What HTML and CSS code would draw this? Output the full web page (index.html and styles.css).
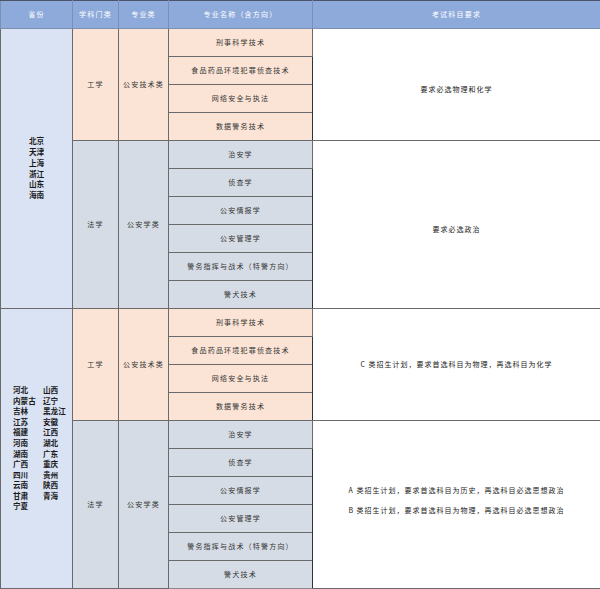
FILE: index.html
```html
<!DOCTYPE html>
<html lang="zh">
<head>
<meta charset="utf-8">
<link rel="stylesheet" href="styles.css">
</head>
<body>
<table class="grid">
  <colgroup>
    <col class="c1"><col class="c2"><col class="c3"><col class="c4"><col class="c5">
  </colgroup>
  <thead>
    <tr class="head">
      <th>省份</th><th>学科门类</th><th>专业类</th><th>专业名称（含方向）</th><th class="req-h">考试科目要求</th>
    </tr>
  </thead>
  <tbody>
    <tr class="eng">
      <td class="prov" rowspan="10"><div class="plist"><span>北京</span><span>天津</span><span>上海</span><span>浙江</span><span>山东</span><span>海南</span></div></td>
      <td rowspan="4">工学</td><td rowspan="4">公安技术类</td><td>刑事科学技术</td>
      <td class="req" rowspan="4"><span class="req-t low">要求必选物理和化学</span></td>
    </tr>
    <tr class="eng"><td>食品药品环境犯罪侦查技术</td></tr>
    <tr class="eng"><td>网络安全与执法</td></tr>
    <tr class="eng"><td>数据警务技术</td></tr>
    <tr class="law">
      <td rowspan="6">法学</td><td rowspan="6">公安学类</td><td>治安学</td>
      <td class="req" rowspan="6"><span class="req-t low">要求必选政治</span></td>
    </tr>
    <tr class="law"><td>侦查学</td></tr>
    <tr class="law"><td>公安情报学</td></tr>
    <tr class="law"><td>公安管理学</td></tr>
    <tr class="law"><td>警务指挥与战术（特警方向）</td></tr>
    <tr class="law"><td>警犬技术</td></tr>

    <tr class="eng">
      <td class="prov" rowspan="10">
        <div class="pgrid">
          <span>河北</span><span>山西</span>
          <span>内蒙古</span><span>辽宁</span>
          <span>吉林</span><span>黑龙江</span>
          <span>江苏</span><span>安徽</span>
          <span>福建</span><span>江西</span>
          <span>河南</span><span>湖北</span>
          <span>湖南</span><span>广东</span>
          <span>广西</span><span>重庆</span>
          <span>四川</span><span>贵州</span>
          <span>云南</span><span>陕西</span>
          <span>甘肃</span><span>青海</span>
          <span>宁夏</span>
        </div>
      </td>
      <td rowspan="4">工学</td><td rowspan="4">公安技术类</td><td>刑事科学技术</td>
      <td class="req" rowspan="4"><span class="req-t">C 类招生计划，要求首选科目为物理，再选科目为化学</span></td>
    </tr>
    <tr class="eng"><td>食品药品环境犯罪侦查技术</td></tr>
    <tr class="eng"><td>网络安全与执法</td></tr>
    <tr class="eng"><td>数据警务技术</td></tr>
    <tr class="law">
      <td rowspan="6">法学</td><td rowspan="6">公安学类</td><td>治安学</td>
      <td class="req" rowspan="6">
        <div class="req-lines">
          <span>A 类招生计划，要求首选科目为历史，再选科目必选思想政治</span>
          <span>B 类招生计划，要求首选科目为物理，再选科目必选思想政治</span>
        </div>
      </td>
    </tr>
    <tr class="law"><td>侦查学</td></tr>
    <tr class="law"><td>公安情报学</td></tr>
    <tr class="law"><td>公安管理学</td></tr>
    <tr class="law"><td>警务指挥与战术（特警方向）</td></tr>
    <tr class="law"><td>警犬技术</td></tr>
  </tbody>
</table>
</body>
</html>
```

FILE: styles.css
```css
html, body {
  margin: 0;
  padding: 0;
  background: #ffffff;
}

.grid {
  border-collapse: collapse;
  table-layout: fixed;
  width: 600px;
  font-family: "Noto Sans CJK SC", "Noto Sans", sans-serif;
  font-size: 7px;
  color: #333333;
}

.c1 { width: 72px; }
.c2 { width: 46px; }
.c3 { width: 50px; }
.c4 { width: 144px; }
.c5 { width: 288px; }

.grid th,
.grid td {
  border: 1px solid #6a6a6a;
  height: 27px;
  padding: 0;
  text-align: center;
  vertical-align: middle;
  letter-spacing: 1.2px;
  line-height: 1;
}

.head th {
  background: #8eaadb;
  color: #ffffff;
  font-weight: normal;
  border-top: 1px solid #4a5468;
  border-color: #7d8fb3;
  border-top-color: #4a5468;
}

.head .req-h {
  border-left: 1px solid #2c3240;
  border-right: 1px solid #8a8a8a;
}

.eng td { background: #fbe4d6; }
.law td { background: #d6dce5; }

.grid td.prov {
  background: #dae3f3;
  color: #1a1a1a;
  font-weight: bold;
  letter-spacing: 0;
  font-size: 7.6px;
}

.plist {
  display: flex;
  flex-direction: column;
  align-items: center;
  line-height: 10.7px;
}

.pgrid {
  display: grid;
  grid-template-columns: 30px 30px;
  padding-left: 12px;
  text-align: left;
  line-height: 10.6px;
}

.grid td.req {
  background: #ffffff;
  border-left: 1px solid #2c3240;
  border-right: 1px solid #8a8a8a;
  color: #222222;
  letter-spacing: 1px;
}

.req-t.low {
  position: relative;
  top: 5px;
}

.req-lines {
  display: flex;
  flex-direction: column;
  align-items: center;
  gap: 13px;
  padding-bottom: 8px;
}

tbody tr:last-child td,
tbody tr:last-child ~ td {
  border-bottom: 1px solid #8a8a8a;
}
```
